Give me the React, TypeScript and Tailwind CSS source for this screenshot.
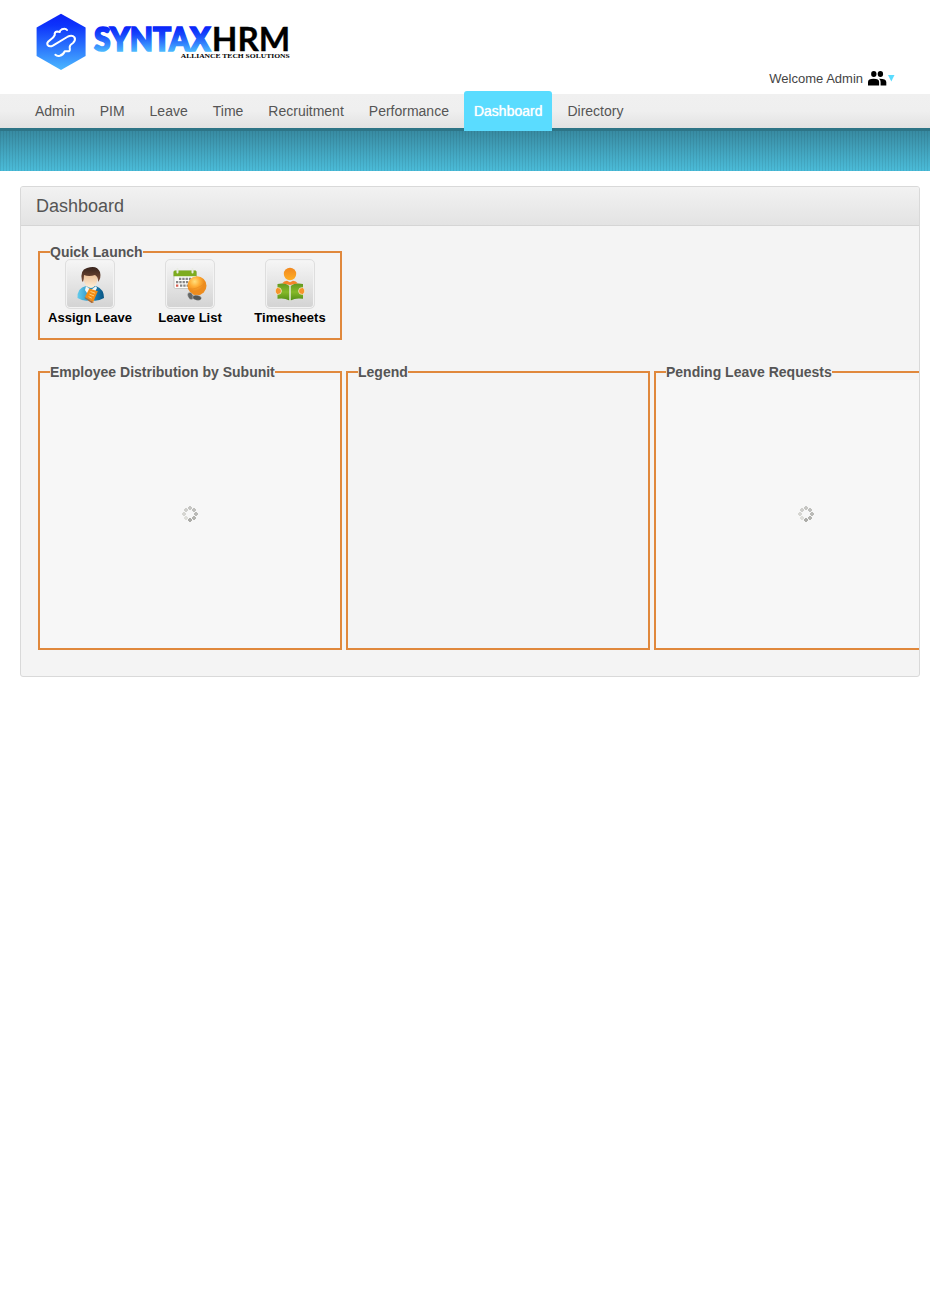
import type { ReactNode } from "react";

const menu = ["Admin", "PIM", "Leave", "Time", "Recruitment", "Performance", "Dashboard", "Directory"];

function Logo() {
  return (
    <svg width="260" height="64" viewBox="34 10 260 64" className="block">
      <defs>
        <linearGradient id="hex" x1="0" y1="14" x2="0" y2="70" gradientUnits="userSpaceOnUse">
          <stop offset="0" stopColor="#0b22f8" />
          <stop offset="0.2" stopColor="#0d33fb" />
          <stop offset="1" stopColor="#4bb8ff" />
        </linearGradient>
        <linearGradient id="word" x1="0" y1="27" x2="0" y2="52" gradientUnits="userSpaceOnUse">
          <stop offset="0" stopColor="#0a24fa" />
          <stop offset="0.3" stopColor="#1645fb" />
          <stop offset="1" stopColor="#4dbcff" />
        </linearGradient>
      </defs>
      <path d="M61 13.7 85.6 27.5V56L61 70 36.6 56V27.5Z" fill="url(#hex)" />
      <path
        d="M67 30Q65.5 27.8 61.8 29.3Q59.8 30.2 59.8 32L57 31.6Q54.3 32 54.7 35.2Q53.8 37.8 49.7 40.3Q46.2 42.6 47.7 45.2Q49.5 47.4 53.3 45.3L68 36.5Q72.3 34.8 74.5 37.3Q76 40.3 73 43Q69.5 45 69.7 47.3Q70.3 50.8 68.8 51.3L64.8 51.2Q63 55 59.8 55.8Q57 56.4 55.4 54.8"
        fill="none" stroke="white" strokeWidth="2" strokeLinecap="round" strokeLinejoin="round"
      />
      <text x="94" y="50.7" textLength="116.5" lengthAdjust="spacingAndGlyphs" fill="url(#word)" stroke="url(#word)" strokeWidth="1.7" fontFamily="Lato, sans-serif" fontWeight="900" fontSize="31.5">SYNTAX</text>
      <text x="211.8" y="51" textLength="78.5" lengthAdjust="spacingAndGlyphs" fill="black" stroke="black" strokeWidth="0.3" fontFamily="Lato, sans-serif" fontWeight="700" fontSize="31.5">HRM</text>
      <text x="180.7" y="58.2" textLength="109" lengthAdjust="spacingAndGlyphs" fill="black" fontFamily="Liberation Serif, serif" fontWeight="700" fontSize="6.8">ALLIANCE TECH SOLUTIONS</text>
    </svg>
  );
}

function PersonIcon() {
  return (
    <svg width="48" height="48" viewBox="0 0 48 48">
      <defs>
        <linearGradient id="hair" x1="0" y1="0" x2="0" y2="1"><stop stopColor="#36231c" /><stop offset="1" stopColor="#805039" /></linearGradient>
        <linearGradient id="shirt"><stop stopColor="#65ccec" /><stop offset="0.55" stopColor="#2089bd" /><stop offset="1" stopColor="#085482" /></linearGradient>
        <linearGradient id="face" x1="0" y1="0" x2="0" y2="1"><stop stopColor="#e7b487" /><stop offset="1" stopColor="#fff0da" /></linearGradient>
      </defs>
      <path d="M11.5 38Q11 28 20 26H30Q38 29 38 38Q31 42 25 40Q18 42 11.5 38Z" fill="url(#shirt)" />
      <path d="m20 26 5 4 5-4 1 2-6 11-6-9Z" fill="#f3f7f7" />
      <path d="M17.5 14Q23 9 31.5 14L31.5 20Q29.5 28 25 28Q19 27 17.5 20Z" fill="url(#face)" />
      <path d="M16 21Q13.5 10 21 8Q31 4.5 34 12Q35.5 18 32 22Q32.5 17 29 15Q23 17 18 15Q18 19 17 22Z" fill="url(#hair)" />
      <path d="m23.3 28.5 8.5 2.8-4.6 10.7-8.2-4.9Z" fill="#f28c13" />
      <path d="m19 37.3 8 4.5.8.8-2.3.3-7-4.8Z" fill="#ad6a32" />
      <path d="m24.5 31.5 4.6 1.7m-5.7.9 4.6 1.8m-5.4.7 3.2 1.6" stroke="#ffe192" strokeWidth="0.8" />
    </svg>
  );
}

function CalendarIcon() {
  return (
    <svg width="48" height="48" viewBox="0 0 48 48">
      <defs><radialGradient id="sun" cx=".38" cy=".28"><stop stopColor="#ffe07d" /><stop offset=".55" stopColor="#ffad35" /><stop offset="1" stopColor="#ed8c1e" /></radialGradient></defs>
      <rect x="8" y="11" width="22.5" height="17.5" rx="1.5" fill="#fcfcfa" stroke="#b4b5b1" strokeWidth=".7" />
      <path d="M7.5 12Q7.5 10.5 9 10.5H29.5Q30.5 10.5 30.5 12V16.2H7.5Z" fill="#7dac1e" />
      <path d="M11.5 9v3.5M26.5 9v3.5" stroke="#e9ece2" strokeWidth="2" strokeLinecap="round" />
      <path d="M13 18.8h15M10 22.2h18M14 25.6h12" stroke="#858585" strokeWidth="2.2" strokeDasharray="2.3 1" />
      <path d="M10 25.6h2.3" stroke="#d65b4e" strokeWidth="2.2" />
      <circle cx="31" cy="25.7" r="9.5" fill="url(#sun)" />
      <path d="M22.5 29Q31 30 39 23" fill="none" stroke="#e68a20" strokeWidth=".6" />
      <ellipse cx="24.5" cy="36" rx="2.6" ry="3.8" fill="#656766" stroke="#d6d6d6" strokeWidth=".4" transform="rotate(-25 24.5 36)" />
      <ellipse cx="31" cy="37.8" rx="4.5" ry="2.6" fill="#535655" stroke="#d6d6d6" strokeWidth=".4" transform="rotate(10 31 37.8)" />
    </svg>
  );
}

function ReaderIcon() {
  return (
    <svg width="48" height="48" viewBox="0 0 48 48">
      <defs>
        <linearGradient id="orange" x1="0" y1="0" x2="0" y2="1"><stop stopColor="#f18820" /><stop offset="1" stopColor="#ffae24" /></linearGradient>
        <linearGradient id="book" x1="0" y1="0" x2="0" y2="1"><stop stopColor="#629821" /><stop offset=".5" stopColor="#85b929" /><stop offset="1" stopColor="#528d16" /></linearGradient>
      </defs>
      <circle cx="24" cy="14" r="6.2" fill="url(#orange)" />
      <path d="M16 23.5Q18 20.7 21 20.7L24 22.2 27 20.7Q30 20.7 32 23.5L24 25Z" fill="#f48429" />
      <path d="M11.5 24Q19 22.5 23.5 26V40.5Q18 37.5 11.5 38.8ZM24.5 26Q29 22.5 37 24V38.8Q30 37.5 24.5 40.5Z" fill="url(#book)" />
      <path d="M24 26v15" stroke="#e9f1d9" strokeWidth="1" />
      <path d="M11.5 27.5Q15.5 27.5 15.5 31T11.5 34.5Q9.3 33.8 9.3 31T11.5 27.5ZM36.5 27.5Q32.5 27.5 32.5 31T36.5 34.5Q38.7 33.8 38.7 31T36.5 27.5Z" fill="#f6932b" stroke="#eff0dd" strokeWidth=".7" />
    </svg>
  );
}

function Launch({ label, children }: { label: string; children: ReactNode }) {
  return (
    <div className="flex w-[100px] flex-col items-center">
      <div className="mt-[-1px] h-[50px] w-[50px] overflow-hidden rounded-[5px] border border-[#dedede] bg-gradient-to-b from-[#f6f6f6] to-[#d3d3d3] shadow-[inset_0_0_0_1px_#f3f3f3]">{children}</div>
      <span className="mt-px text-[13px] leading-[16px] font-bold whitespace-nowrap text-black">{label}</span>
    </div>
  );
}

const dots = [
  [8, 2, "#c6c6c3"], [12, 4, "#c0c0bd"], [14, 8, "#babab7"], [12, 12, "#b4b4b0"],
  [8, 14, "#adada9"], [4, 12, "#dededa"], [2, 8, "#d6d6d2"], [4, 4, "#cfcfcc"],
] as const;

function Spinner() {
  return (
    <svg width="16" height="16" viewBox="0 0 16 16">
      {dots.map(([x, y, color], i) => (
        <path key={i} d={`M${x - 1} ${y - 2}h2v1h1v2h-1v1h-2v-1h-1v-2h1z`} fill={color} />
      ))}
    </svg>
  );
}

function Widget({ title, loading = false }: { title: string; loading?: boolean }) {
  return (
    <fieldset className="h-[286px] w-[304px] shrink-0 border-2 border-[#e0883c]">
      <legend className="ml-[10px] text-[14px] leading-[16px] font-bold">{title}</legend>
      {loading && <div className="flex h-[268px] items-center justify-center bg-[#f7f7f7]"><Spinner /></div>}
    </fieldset>
  );
}

export default function App() {
  return (
    <div className="min-h-[1291px] w-[930px] bg-white font-['Liberation_Sans',Arial,sans-serif] text-[#555]">
      <header className="flex h-[94px] justify-between pt-[10px] pr-[35px] pl-[34px]">
        <Logo />
        <div className="mt-[60px] flex h-[16px] items-center text-[13px] text-[#444]">
          <span className="pt-[2px] whitespace-nowrap">Welcome Admin</span>
          <svg width="19" height="16" viewBox="0 0 19 16" className="ml-[5px]" fill="black">
            <ellipse cx="5.8" cy="4" rx="2.7" ry="3" />
            <ellipse cx="12.4" cy="4" rx="2.7" ry="3" />
            <path d="M0 15.5V12Q0 8.8 5.6 8.8T11.1 12V15.5ZM12.6 15.5V12Q12.6 9.8 11 8.8Q18 8.6 18.3 12V15.5Z" />
          </svg>
          <svg width="7" height="7" viewBox="0 0 7 7" className="ml-px"><path d="M0 0H6.5L3.3 6.5Z" fill="#5adcff" /></svg>
        </div>
      </header>
      <nav className="flex h-[34px] bg-[linear-gradient(#f0f0f0_0%,#efefef_50%,#e2e2e2_100%)] pl-[25px]">
        {menu.map((item) => (
          <a key={item} className={item === "Dashboard"
            ? "z-10 mt-[-3px] mr-[5px] h-[40px] rounded-t-[3px] bg-[#5adcff] px-[10px] pt-[3px] text-[14px] leading-[34px] text-white [text-shadow:0_0_1px_white]"
            : "mr-[5px] px-[10px] text-[14px] leading-[34px]"}>{item}</a>
        ))}
      </nav>
      <div className="h-[43px] border-t-[3px] border-[#2d7486] bg-[repeating-linear-gradient(90deg,#00000012_0px,#00000012_1px,transparent_1px,transparent_3px),linear-gradient(#388ba2,#4bbcd9)]" />
      <main className="mt-[15px] ml-[20px] h-[491px] w-[900px] overflow-hidden rounded-[3px] border border-[#d9d9d9] bg-[#f4f4f4]">
        <h1 className="h-[39px] border-b border-[#d5d5d5] bg-gradient-to-b from-[#f2f2f2] to-[#e3e3e3] pl-[15px] text-[18px] leading-[38px]">Dashboard</h1>
        <div className="pt-[18px] pl-[17px]">
          <fieldset className="h-[96px] w-[304px] border-2 border-[#e0883c]">
            <legend className="ml-[10px] text-[14px] leading-[16px] font-bold">Quick Launch</legend>
            <div className="flex">
              <Launch label="Assign Leave"><PersonIcon /></Launch>
              <Launch label="Leave List"><CalendarIcon /></Launch>
              <Launch label="Timesheets"><ReaderIcon /></Launch>
            </div>
          </fieldset>
          <div className="mt-[24px] flex gap-[4px]">
            <Widget title="Employee Distribution by Subunit" loading />
            <Widget title="Legend" />
            <Widget title="Pending Leave Requests" loading />
          </div>
        </div>
      </main>
    </div>
  );
}
